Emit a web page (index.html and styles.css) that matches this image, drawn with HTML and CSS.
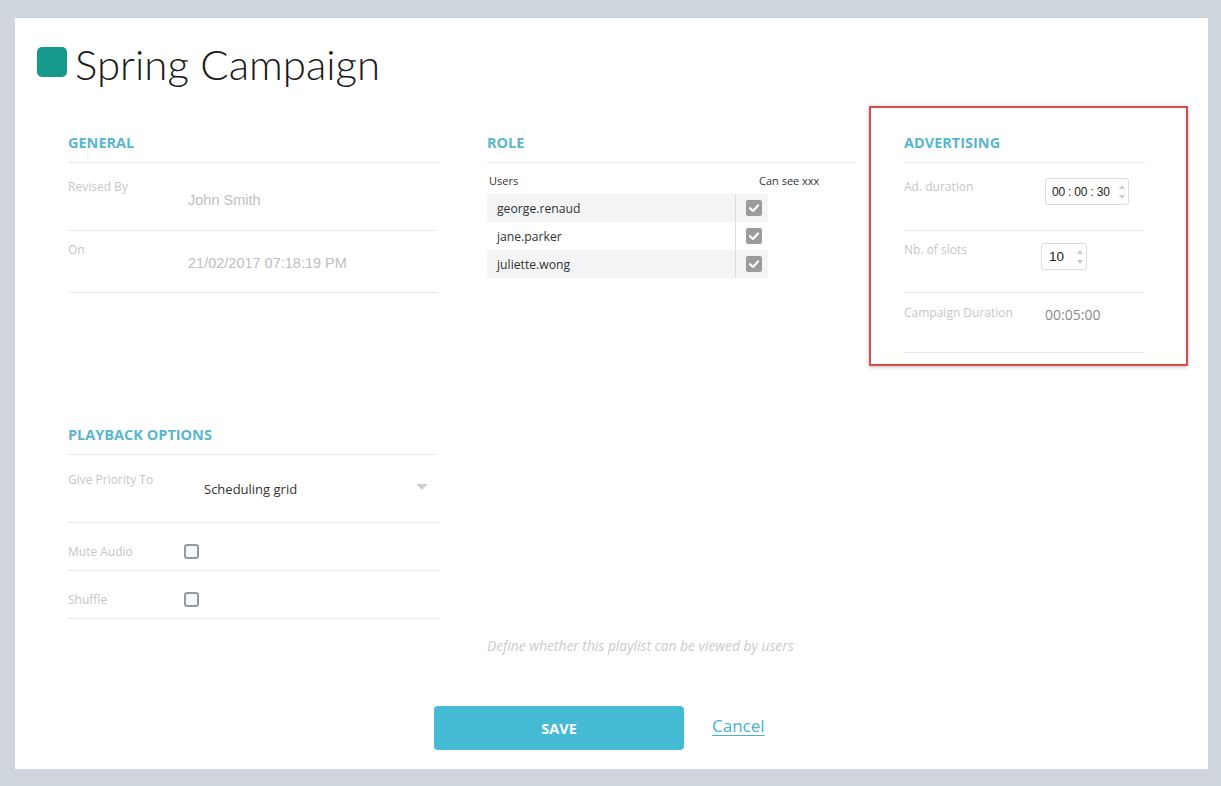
FILE: index.html
```html
<!DOCTYPE html>
<html>
<head>
<meta charset="utf-8">
<link rel="stylesheet" href="styles.css">
</head>
<body>
<div class="card">
  <header class="title">
    <span class="swatch"></span>
    <h1>Spring Campaign</h1>
  </header>

  <div class="grid">
    <section class="sec general">
      <h2>GENERAL</h2>
      <div class="row first">
        <span class="label">Revised By</span>
        <span class="value">John Smith</span>
      </div>
      <div class="row second">
        <span class="label">On</span>
        <span class="value">21/02/2017 07:18:19 PM</span>
      </div>
    </section>

    <section class="sec role">
      <h2>ROLE</h2>
      <div class="thead"><span>Users</span><span>Can see xxx</span></div>
      <div class="trow shade"><span class="name">george.renaud</span><span class="cell"><span class="chk"><svg viewBox="0 0 16 16" width="16" height="16"><polyline points="4,8.2 7,11 12,5.5" fill="none" stroke="#fff" stroke-width="2.2" stroke-linecap="round" stroke-linejoin="round"/></svg></span></span></div>
      <div class="trow"><span class="name">jane.parker</span><span class="cell"><span class="chk"><svg viewBox="0 0 16 16" width="16" height="16"><polyline points="4,8.2 7,11 12,5.5" fill="none" stroke="#fff" stroke-width="2.2" stroke-linecap="round" stroke-linejoin="round"/></svg></span></span></div>
      <div class="trow shade"><span class="name">juliette.wong</span><span class="cell"><span class="chk"><svg viewBox="0 0 16 16" width="16" height="16"><polyline points="4,8.2 7,11 12,5.5" fill="none" stroke="#fff" stroke-width="2.2" stroke-linecap="round" stroke-linejoin="round"/></svg></span></span></div>
    </section>

    <section class="sec adv">
      <h2>ADVERTISING</h2>
      <div class="row first">
        <span class="label adv-label">Ad. duration</span>
        <span class="spin time">
          <span class="spin-text">00 : 00 : 30</span>
          <svg class="arrows" viewBox="0 0 8 20" width="8" height="20"><polygon points="1,7 4,3 7,7" fill="#c8c8c8"/><polygon points="1,13 4,17 7,13" fill="#c8c8c8"/></svg>
        </span>
      </div>
      <div class="row second">
        <span class="label adv-label slots">Nb. of slots</span>
        <span class="spin num">
          <span class="spin-text">10</span>
          <svg class="arrows" viewBox="0 0 8 20" width="8" height="20"><polygon points="1,7 4,3 7,7" fill="#c8c8c8"/><polygon points="1,13 4,17 7,13" fill="#c8c8c8"/></svg>
        </span>
      </div>
      <div class="row third">
        <span class="label adv-label">Campaign Duration</span>
        <span class="duration">00:05:00</span>
      </div>
    </section>

    <section class="sec playback">
      <h2>PLAYBACK OPTIONS</h2>
      <div class="row pfirst">
        <span class="label plabel">Give Priority To</span>
        <span class="select">
          <span class="select-text">Scheduling grid</span>
          <svg class="caret" viewBox="0 0 12 6" width="12" height="6"><polygon points="0,0 12,0 6,6" fill="#cfcfcf"/></svg>
        </span>
      </div>
      <div class="row pcheck">
        <span class="label plabel">Mute Audio</span>
        <span class="box"></span>
      </div>
      <div class="row pcheck">
        <span class="label plabel">Shuffle</span>
        <span class="box"></span>
      </div>
    </section>

    <p class="note">Define whether this playlist can be viewed by users</p>
  </div>

  <footer class="actions">
    <button class="save">SAVE</button>
    <a class="cancel" href="#">Cancel</a>
  </footer>
</div>
</body>
</html>
```
FILE: styles.css
```css
html, body {
  margin: 0;
  padding: 0;
  background: #cfd6de;
}

body {
  font-family: "Open Sans", "Liberation Sans", sans-serif;
  padding: 18px 13px 17px 15px;
}

.card {
  background: #fff;
  height: 751px;
  box-sizing: border-box;
  padding: 29px 0 0 0;
}

.title {
  display: flex;
  align-items: center;
  height: 30px;
  padding-left: 22px;
  gap: 8px;
}

.swatch {
  width: 30px;
  height: 30px;
  border-radius: 5px;
  background: #169a8b;
  flex: none;
}

.title h1 {
  margin: 0;
  font-family: "Lato", "Open Sans", sans-serif;
  font-weight: 300;
  font-size: 42px;
  line-height: 30px;
  color: #1a1a1a;
  position: relative;
  top: 2px;
}

.grid {
  display: grid;
  grid-template-columns: 370px 368px 241px;
  column-gap: 49px;
  margin-top: 56px;
  padding-left: 53px;
  align-items: start;
}

.sec h2 {
  margin: 0;
  font-size: 14.5px;
  font-weight: 700;
  line-height: 20px;
  color: #5ab6cd;
  padding-bottom: 9px;
  border-bottom: 1px solid #e9e9e9;
}

.row {
  display: flex;
  align-items: flex-start;
  box-sizing: border-box;
  border-bottom: 1px solid #e9e9e9;
}

.row.first {
  height: 68px;
  padding-top: 16px;
}

.row.second {
  height: 62px;
  padding-top: 11px;
}

.row.third {
  height: 60px;
  padding-top: 12px;
}

.label {
  font-size: 12px;
  line-height: 16px;
  color: #c6c6c6;
  width: 120px;
  flex: none;
}

.value {
  font-family: "Liberation Sans", Arial, sans-serif;
  font-size: 14.5px;
  line-height: 18px;
  color: #c0c0c0;
  margin-top: 12px;
}

/* ROLE */
.thead {
  display: flex;
  height: 31px;
  align-items: center;
  padding-left: 2px;
  font-size: 11px;
  font-weight: 400;
  color: #333;
  position: relative;
  top: 2px;
}

.thead span:first-child {
  width: 270px;
}

.trow {
  display: flex;
  width: 281px;
  height: 28px;
  align-items: center;
}

.trow.shade {
  background: #f3f4f5;
}

.name {
  width: 238px;
  padding-left: 10px;
  font-size: 12.2px;
  color: #333;
}

.cell {
  align-self: stretch;
  border-left: 1px solid #dcdcdc;
  display: flex;
  align-items: center;
  padding-left: 10px;
}

.chk {
  width: 16px;
  height: 16px;
  background: #9b9b9b;
  border-radius: 2px;
  display: block;
}

.chk svg {
  display: block;
}

/* ADVERTISING */
.adv {
  position: relative;
}

.adv::after {
  content: "";
  position: absolute;
  left: -35px;
  top: -27px;
  right: -43px;
  bottom: -13px;
  border: 2.5px solid #e04a4a;
  box-shadow: 0 1px 4px rgba(0, 0, 0, 0.25);
  pointer-events: none;
}

.adv-label {
  width: 141px;
}

.adv-label.slots {
  width: 137px;
}

.spin {
  display: flex;
  align-items: center;
  box-sizing: border-box;
  border: 1px solid #dcdcdc;
  border-radius: 3px;
  background: #fff;
  font-family: "Liberation Sans", Arial, sans-serif;
  color: #222;
}

.spin.time {
  width: 84px;
  height: 27px;
  margin-top: -1px;
  padding-left: 6px;
  font-size: 12px;
  letter-spacing: -0.2px;
}

.spin.num {
  width: 46px;
  height: 27px;
  margin-top: 1px;
  padding-left: 7px;
  font-size: 13.5px;
}

.spin-text {
  flex: 1;
  white-space: pre;
}

.arrows {
  margin-right: 2px;
  flex: none;
}

.duration {
  font-size: 14px;
  line-height: 18px;
  color: #8a8a8a;
  margin-top: 1px;
}

/* PLAYBACK */
.playback {
  grid-column: 1;
  grid-row: 2;
  margin-top: 72px;
}

.plabel {
  width: 116px;
}

.row.pfirst {
  height: 68px;
  padding-top: 17px;
}

.select {
  flex: 1;
  display: flex;
  align-items: center;
  margin-top: 8px;
  padding-left: 20px;
  padding-right: 10px;
}

.select-text {
  flex: 1;
  font-size: 13px;
  line-height: 18px;
  color: #333;
}

.caret {
  margin-top: -4px;
}

.row.pcheck {
  height: 48px;
  padding-top: 21px;
}

.box {
  width: 15px;
  height: 15px;
  box-sizing: border-box;
  border: 2px solid #9a9a9a;
  border-radius: 3px;
  background: #f5f9fd;
}

.note {
  grid-column: 2;
  grid-row: 3;
  margin: 18px 0 0 0;
  font-size: 13.8px;
  line-height: 18px;
  font-style: italic;
  color: #cbcbcb;
}

/* FOOTER */
.actions {
  display: flex;
  align-items: center;
  gap: 28px;
  margin-top: 51px;
  padding-left: 419px;
}

.save {
  width: 250px;
  height: 44px;
  border: none;
  border-radius: 4px;
  background: #45bbd3;
  color: #fff;
  font-family: "Open Sans", sans-serif;
  font-weight: 700;
  font-size: 14.5px;
  padding: 0;
}

.cancel {
  font-size: 17px;
  line-height: 20px;
  color: #45b4cc;
  text-decoration: underline;
  text-underline-offset: 3px;
  position: relative;
  top: -2px;
}
```
